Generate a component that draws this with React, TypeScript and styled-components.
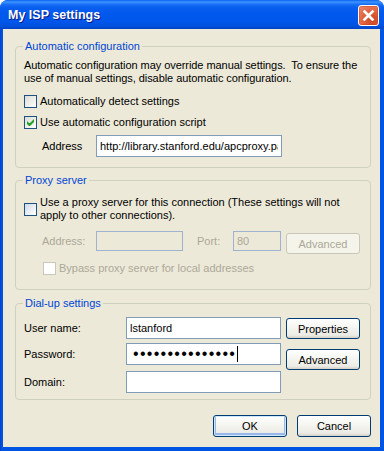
import React from "react";
import styled, { createGlobalStyle } from "styled-components";

const GlobalStyle = createGlobalStyle`
  html, body {
    margin: 0;
    padding: 0;
    background: #ffffff;
  }
  * {
    box-sizing: border-box;
  }
`;

const App = () => {
  return (
    <>
      <GlobalStyle />
      <Window>
        <TitleBar>
          <Title>My ISP settings</Title>
          <CloseButton aria-label="Close">
            <svg width="13" height="13" viewBox="0 0 13 13">
              <path
                d="M2.5 2.5 L10.5 10.5 M10.5 2.5 L2.5 10.5"
                stroke="#ffffff"
                strokeWidth="2.6"
                strokeLinecap="square"
              />
            </svg>
          </CloseButton>
        </TitleBar>
        <Frame>
          <Body>
            <Group>
              <Legend>Automatic configuration</Legend>
              <Paragraph>
                Automatic configuration may override manual settings.&nbsp; To
                ensure the
                <br />
                use of manual settings, disable automatic configuration.
              </Paragraph>
              <CheckRow $top={10}>
                <CheckBox />
                <Label>Automatically detect settings</Label>
              </CheckRow>
              <CheckRow $top={8}>
                <CheckBox $checked />
                <Label>Use automatic configuration script</Label>
              </CheckRow>
              <FieldRow $top={6} $indent={18}>
                <FieldLabel $width={54}>Address</FieldLabel>
                <TextBox
                  $width={186}
                  readOnly
                  defaultValue="http://library.stanford.edu/apcproxy.pac"
                />
              </FieldRow>
            </Group>

            <Group $top={6} $padTop={9} $padBottom={14}>
              <Legend>Proxy server</Legend>
              <CheckRow $top={0}>
                <CheckBox $focused />
                <Label>
                  Use a proxy server for this connection (These settings will not
                  apply to other connections).
                </Label>
              </CheckRow>
              <ProxyRow>
                <FieldLabel $width={54} $disabled>
                  Address:
                </FieldLabel>
                <TextBox $width={87} $height={20} disabled defaultValue="" />
                <FieldLabel $width={36} $gap={14} $disabled>
                  Port:
                </FieldLabel>
                <TextBox $width={48} $height={20} disabled defaultValue="80" />
                <Button $width={74} $gap={5} $offset={2} disabled>
                  Advanced
                </Button>
              </ProxyRow>
              <CheckRow $top={9} $indent={19}>
                <CheckBox $disabled />
                <Label $disabled>Bypass proxy server for local addresses</Label>
              </CheckRow>
            </Group>

            <Group $top={7} $padTop={7} $padBottom={8}>
              <Legend>Dial-up settings</Legend>
              <DialGrid>
                <FieldLabel>User name:</FieldLabel>
                <TextBox readOnly defaultValue="lstanford" />
                <Button $offset={1}>Properties</Button>

                <FieldLabel>Password:</FieldLabel>
                <PasswordBox>
                  <Dots>{"•".repeat(15)}</Dots>
                  <Caret />
                </PasswordBox>
                <Button $offset={6}>Advanced</Button>

                <FieldLabel>Domain:</FieldLabel>
                <TextBox readOnly defaultValue="" />
                <span />
              </DialGrid>
            </Group>

            <Footer>
              <Button $width={74} $height={22} $default>
                OK
              </Button>
              <Button $width={74} $height={22}>
                Cancel
              </Button>
            </Footer>
          </Body>
        </Frame>
      </Window>
    </>
  );
};

export default App;

const uiFont = `"Liberation Sans", Arial, sans-serif`;

const Window = styled.div`
  width: 384px;
  height: 451px;
  display: flex;
  flex-direction: column;
  border-radius: 8px 8px 0 0;
  overflow: hidden;
  background: #0054e3;
`;

const TitleBar = styled.div`
  height: 29px;
  flex: none;
  display: flex;
  align-items: center;
  justify-content: space-between;
  padding: 1px 5px 0 8px;
  background: linear-gradient(
    to bottom,
    #0a5ff0 0px,
    #3d95ff 2px,
    #1e73f8 4px,
    #0a5fee 7px,
    #0058ee 14px,
    #0056ea 22px,
    #0050dc 26px,
    #0044c8 29px
  );
`;

const Title = styled.span`
  font-family: "Liberation Sans", Arial, sans-serif;
  font-weight: bold;
  font-size: 12.5px;
  color: #ffffff;
  text-shadow: 1px 1px 0 #0a1883;
`;

const CloseButton = styled.div`
  width: 21px;
  height: 21px;
  display: flex;
  align-items: center;
  justify-content: center;
  border: 1px solid #ffffff;
  border-radius: 3px;
  background: radial-gradient(
    circle at 70% 75%,
    #cc4622 0%,
    #e0603c 45%,
    #ec8c70 100%
  );
  box-shadow: inset 0 0 0 1px rgba(170, 40, 10, 0.25);
`;

const Frame = styled.div`
  flex: 1;
  display: flex;
  min-width: 0;
  padding: 0 4px 4px 3px;
  background: linear-gradient(to right, #0041c8 0, #0054e3 2px);
`;

const Body = styled.div`
  flex: 1;
  min-width: 0;
  display: flex;
  flex-direction: column;
  padding: 11px 9px 0 12px;
  background: #ece9d8;
  font-family: ${uiFont};
  font-size: 11px;
  line-height: 13px;
  color: #000000;
`;

const Group = styled.fieldset<{ $top?: number; $padTop?: number; $padBottom?: number }>`
  margin: ${(p) => p.$top ?? 0}px 0 0 0;
  padding: ${(p) => p.$padTop ?? 6}px 10px ${(p) => p.$padBottom ?? 10}px 8px;
  border: 1px solid #d0d0bf;
  border-radius: 4px;
  min-width: 0;
  display: flex;
  flex-direction: column;
`;

const Legend = styled.legend`
  color: #0046d5;
  padding: 0 2px;
  margin-left: -1px;
  font-size: 11px;
  line-height: 13px;
`;

const Paragraph = styled.div`
  margin: 0;
  white-space: nowrap;
  letter-spacing: -0.06px;
`;

const CheckRow = styled.div<{ $top: number; $indent?: number }>`
  display: flex;
  align-items: center;
  gap: 3px;
  margin-top: ${(p) => p.$top}px;
  margin-left: ${(p) => p.$indent ?? 0}px;
`;

const CheckBox = styled.span<{ $checked?: boolean; $disabled?: boolean; $focused?: boolean }>`
  flex: none;
  position: relative;
  width: 13px;
  height: 13px;
  border: 1px solid ${(p) => (p.$disabled ? "#cac8bb" : "#1c5180")};
  background: ${(p) =>
    p.$disabled
      ? "#ffffff"
      : p.$focused
      ? "linear-gradient(135deg, #cfd8e6 0%, #f2f5f9 70%, #ffffff 100%)"
      : "linear-gradient(135deg, #dcdcd7 0%, #f4f4f0 70%, #ffffff 100%)"};
  &::after {
    content: "";
    display: ${(p) => (p.$checked ? "block" : "none")};
    position: absolute;
    left: 2px;
    top: 2px;
    width: 7px;
    height: 7px;
    background: url("data:image/svg+xml;utf8,<svg xmlns='http://www.w3.org/2000/svg' width='7' height='7'><path d='M0 2 v3 l2 2 h1 l4 -4 v-3 l-4 4 h-1 z' fill='%2321a121'/></svg>");
  }
`;

const Label = styled.span<{ $disabled?: boolean }>`
  color: ${(p) => (p.$disabled ? "#aca899" : "#000000")};
`;

const FieldRow = styled.div<{ $top: number; $indent?: number }>`
  display: flex;
  align-items: center;
  margin-top: ${(p) => p.$top}px;
  margin-left: ${(p) => p.$indent ?? 0}px;
`;

const ProxyRow = styled.div`
  display: flex;
  align-items: flex-start;
  margin: 9px 0 0 18px;
  height: 22px;
  & > span {
    line-height: 20px;
  }
`;

const FieldLabel = styled.span<{ $width?: number; $gap?: number; $disabled?: boolean }>`
  flex: none;
  width: ${(p) => (p.$width ? `${p.$width}px` : "auto")};
  margin-left: ${(p) => p.$gap ?? 0}px;
  color: ${(p) => (p.$disabled ? "#aca899" : "#000000")};
`;

const TextBox = styled.input<{ $width?: number; $height?: number }>`
  width: ${(p) => (p.$width ? `${p.$width}px` : "100%")};
  height: ${(p) => p.$height ?? 22}px;
  margin: 0;
  padding: 0 3px;
  border: 1px solid #7f9db9;
  border-radius: 0;
  background: #ffffff;
  font-family: ${uiFont};
  font-size: 11px;
  color: #000000;
  outline: none;
  &:disabled {
    background: transparent;
    border-color: #9fb3d1;
    color: #aca899;
  }
`;

const PasswordBox = styled.div`
  height: 22px;
  display: flex;
  align-items: center;
  padding: 0 0 0 6px;
  border: 1px solid #7f9db9;
  background: #ffffff;
  overflow: hidden;
`;

const Dots = styled.span`
  font-size: 16px;
  line-height: 16px;
  letter-spacing: 1.28px;
  color: #000000;
`;

const Caret = styled.span`
  width: 1px;
  height: 16px;
  margin-left: 1px;
  background: #000000;
`;

const Button = styled.button<{
  $width?: number;
  $height?: number;
  $gap?: number;
  $offset?: number;
  $default?: boolean;
}>`
  flex: none;
  width: ${(p) => (p.$width ? `${p.$width}px` : "100%")};
  height: ${(p) => p.$height ?? 21}px;
  margin: ${(p) => p.$offset ?? 0}px 0 0 ${(p) => p.$gap ?? 0}px;
  padding: 0;
  border: 1px solid #003c74;
  border-radius: 3px;
  background: linear-gradient(
    to bottom,
    #ffffff 0%,
    #f6f6f2 40%,
    #ecebe5 85%,
    #d6d0c5 100%
  );
  box-shadow: ${(p) =>
    p.$default
      ? "inset 0 0 0 1px #cee7ff, inset 0 -1px 0 2px #98b8ea"
      : "none"};
  font-family: ${uiFont};
  font-size: 11px;
  color: #000000;
  &:disabled {
    border-color: #c9c7ba;
    background: #f5f4ea;
    color: #aca899;
  }
`;

const DialGrid = styled.div`
  display: grid;
  grid-template-columns: 102px 155px 74px;
  grid-template-rows: 22px 22px 22px;
  column-gap: 0;
  row-gap: 4px;
  align-items: start;
  & > :nth-child(3n) {
    margin-left: 5px;
  }
  & > :nth-child(3n + 1) {
    line-height: 22px;
  }
  & > :nth-child(n + 7) {
    margin-top: 2px;
  }
`;

const Footer = styled.div`
  display: flex;
  justify-content: flex-end;
  gap: 10px;
  margin-top: 15px;
`;
